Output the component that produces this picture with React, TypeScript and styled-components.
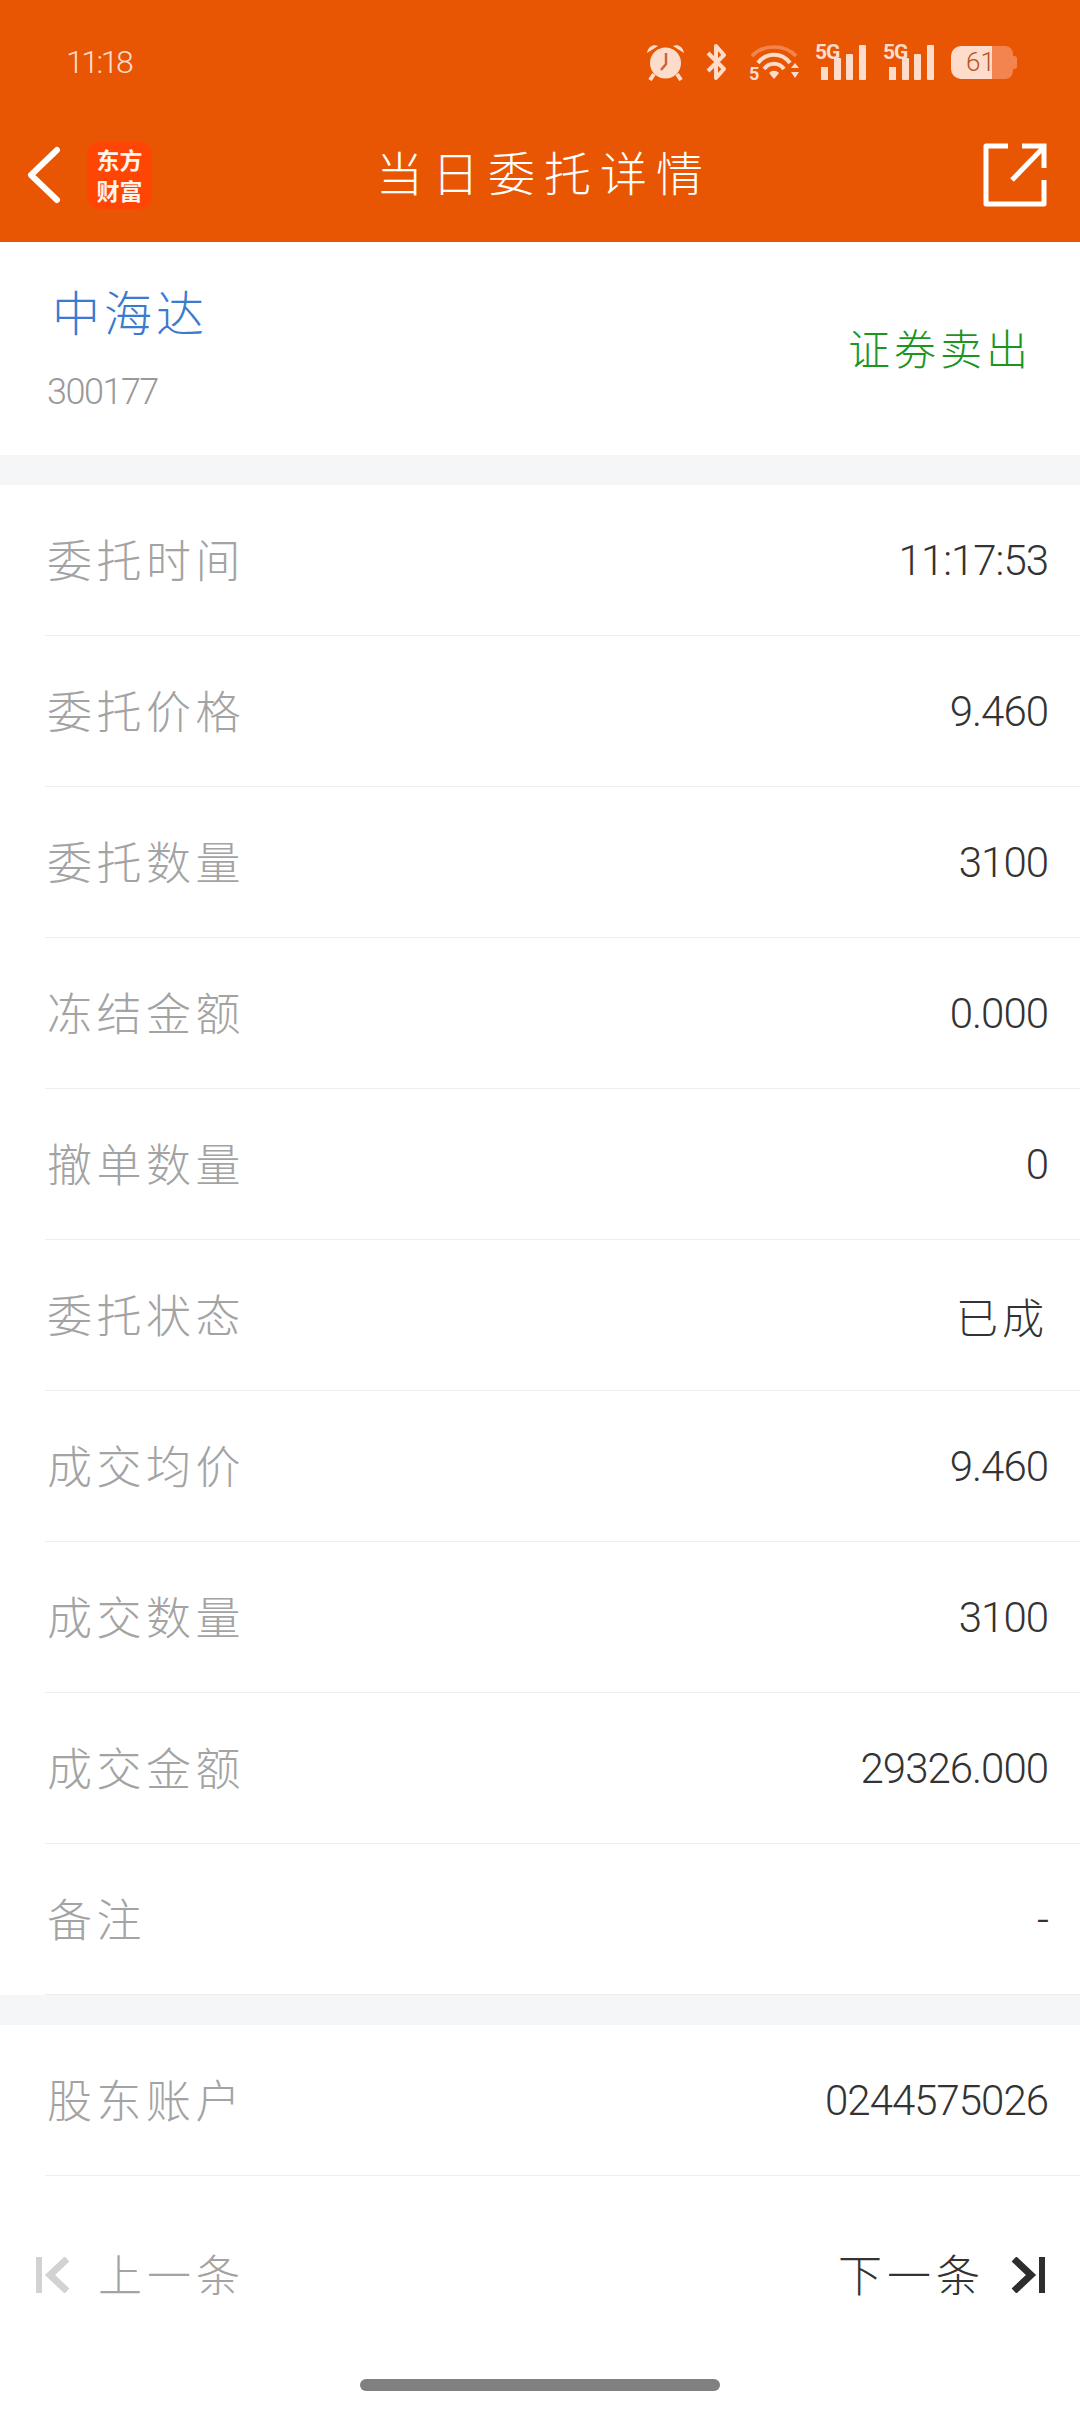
import React from 'react';
import styled, { createGlobalStyle } from 'styled-components';

const SANS = '"Roboto", "Noto Sans CJK SC", sans-serif';

const GlobalStyle = createGlobalStyle`
  html, body {
    margin: 0;
    padding: 0;
    background: #fff;
  }
  * {
    box-sizing: border-box;
  }
`;

const Screen = styled.div`
  width: 1080px;
  height: 2412px;
  display: flex;
  flex-direction: column;
  overflow: hidden;
  background: #fff;
  font-family: ${SANS};
  font-weight: 300;
`;

const Header = styled.header`
  height: 242px;
  display: flex;
  flex-direction: column;
  background: #e85603;
`;

const StatusBar = styled.div`
  height: 108px;
  padding: 16px 63px 0 66px;
  display: flex;
  align-items: center;
  justify-content: space-between;
`;

const Clock = styled.span`
  font-size: 32px;
  font-weight: 300;
  letter-spacing: -2.5px;
  color: #fddccb;
`;

const StatusIcons = styled.div`
  display: flex;
  align-items: center;
`;

const StatusIcon = styled.svg<{ $gap?: number }>`
  display: block;
  margin-right: ${(props) => props.$gap ?? 0}px;
`;

const Battery = styled.div`
  display: flex;
  align-items: center;
  width: 66px;
  height: 33px;
`;

const BatteryLevel = styled.div`
  width: 41px;
  height: 33px;
  padding-left: 15px;
  border-radius: 10px 0 0 10px;
  background: #fddccb;
  color: #b9531c;
  font-size: 26px;
  line-height: 33px;
  font-weight: 300;
`;

const BatteryRest = styled.div`
  width: 21px;
  height: 33px;
  border-radius: 0 8px 8px 0;
  background: #f38450;
`;

const BatteryCap = styled.div`
  width: 4px;
  height: 13px;
  border-radius: 0 3px 3px 0;
  background: #f38450;
`;

const NavBar = styled.div`
  flex: 1;
  position: relative;
  padding: 0 33px 0 26px;
  display: flex;
  align-items: center;
  justify-content: space-between;
`;

const NavLeft = styled.div`
  display: flex;
  align-items: center;
  gap: 25px;
`;

const Logo = styled.div`
  width: 65px;
  height: 67px;
  border-radius: 13px;
  background: #ff4503;
  display: flex;
  flex-direction: column;
  align-items: center;
  justify-content: center;
  color: #fff4ec;
  font-family: "Noto Sans CJK SC", sans-serif;
  font-size: 23px;
  line-height: 31px;
  font-weight: 700;
`;

const Title = styled.h1`
  position: absolute;
  left: 376px;
  top: 36px;
  margin: 0;
  font-size: 47px;
  line-height: 62px;
  font-weight: 300;
  letter-spacing: 9px;
  color: #fff;
  white-space: nowrap;
`;

const Summary = styled.section`
  height: 213px;
  padding: 0 48px 0 47px;
  display: flex;
  align-items: center;
  justify-content: space-between;
`;

const StockInfo = styled.div`
  display: flex;
  flex-direction: column;
  gap: 26px;
`;

const StockName = styled.div`
  margin-left: 5px;
  font-size: 48px;
  line-height: 60px;
  letter-spacing: 4px;
  color: #3a7bd0;
`;

const StockCode = styled.div`
  font-size: 36px;
  line-height: 42px;
  letter-spacing: -1.5px;
  color: #999;
`;

const Side = styled.div`
  margin-bottom: 4px;
  font-size: 42px;
  letter-spacing: 4px;
  color: #1a961f;
`;

const Gap = styled.div`
  height: 30px;
  background: #f5f6f8;
`;

const Rows = styled.section`
  display: flex;
  flex-direction: column;
`;

const Row = styled.div`
  height: 151px;
  margin-left: 45px;
  padding: 0 32px 0 2px;
  display: flex;
  align-items: center;
  justify-content: space-between;
  border-bottom: 1px solid #eeeeee;
`;

const Label = styled.span`
  margin-bottom: 3px;
  font-size: 45px;
  letter-spacing: 4.5px;
  color: #a3a3a3;
`;

const Value = styled.span<{ $cjk?: boolean }>`
  font-size: 42px;
  letter-spacing: ${(props) => (props.$cjk ? 4 : -1)}px;
  color: #333;
`;

const Pager = styled.nav`
  height: 198px;
  padding: 0 35px 0 36px;
  display: flex;
  align-items: center;
  justify-content: space-between;
`;

const PagerButton = styled.div<{ $disabled?: boolean }>`
  display: flex;
  align-items: center;
  gap: ${(props) => (props.$disabled ? 28 : 26)}px;
  font-size: 44px;
  letter-spacing: 5px;
  color: ${(props) => (props.$disabled ? '#a3a3a3' : '#333')};
`;

const PagerText = styled.span`
  margin-bottom: 4px;
`;

const HomeSlot = styled.div`
  flex: 1;
  padding-top: 5px;
  display: flex;
  justify-content: center;
`;

const HomeBar = styled.div`
  width: 360px;
  height: 12px;
  border-radius: 6px;
  background: #808080;
`;

const ICON = '#fddccb';

function AlarmIcon() {
  return (
    <StatusIcon $gap={21} width="39" height="38" viewBox="0 0 39 38">
      <circle cx="19.5" cy="20" r="15.5" fill={ICON} />
      <path d="M1 10 C2 3 8 1 12 3 Z M38 10 C37 3 31 1 27 3 Z" fill={ICON} />
      <path d="M8 31 L4 37 M31 31 L35 37" stroke={ICON} strokeWidth="4" />
      <path d="M20 10 V21 L15 27" stroke="#c8683a" strokeWidth="2.5" fill="none" />
    </StatusIcon>
  );
}

function BluetoothIcon() {
  return (
    <StatusIcon $gap={22} width="21" height="38" viewBox="0 0 21 38">
      <path
        d="M2 10 L18 26 L10 35 V3 L18 12 L2 28"
        fill="none"
        stroke={ICON}
        strokeWidth="4"
        strokeLinejoin="round"
      />
    </StatusIcon>
  );
}

function WifiIcon() {
  return (
    <StatusIcon $gap={15} width="51" height="46" viewBox="0 -4 51 46">
      <path d="M3 13 C14 1 36 1 47 13" fill="none" stroke="#f38450" strokeWidth="3.5" />
      <path d="M9 20 C17 9 33 9 41 20" fill="none" stroke={ICON} strokeWidth="4" />
      <path d="M15 26 C20 19 30 19 35 26" fill="none" stroke={ICON} strokeWidth="4" />
      <path d="M20 30 C23 27 27 27 30 30 L25 36 Z" fill={ICON} />
      <path d="M42 25 L46 20 L50 25 Z M42 29 L50 29 L46 35 Z" fill={ICON} />
      <text x="0" y="37" fontFamily="Roboto" fontWeight="700" fontSize="18" fill={ICON}>
        5
      </text>
    </StatusIcon>
  );
}

function SignalIcon({ gap }: { gap: number }) {
  return (
    <StatusIcon $gap={gap} width="52" height="46" viewBox="0 -4 52 46">
      <text x="0" y="16" fontFamily="Roboto" fontWeight="700" fontSize="21" letterSpacing="-1" fill={ICON}>
        5G
      </text>
      <rect x="6" y="24" width="7" height="13" fill={ICON} />
      <rect x="19" y="15" width="7" height="22" rx="1" fill={ICON} />
      <rect x="31" y="11" width="7" height="26" rx="1" fill={ICON} />
      <rect x="44" y="2" width="7" height="35" rx="1" fill={ICON} />
    </StatusIcon>
  );
}

function BackIcon() {
  return (
    <svg width="36" height="58" viewBox="0 0 36 58">
      <path
        d="M31 4 L5 29 L31 54"
        fill="none"
        stroke="#fff"
        strokeWidth="6"
        strokeLinecap="round"
        strokeLinejoin="round"
      />
    </svg>
  );
}

function ShareIcon() {
  return (
    <svg width="64" height="64" viewBox="0 0 64 64">
      <path
        d="M25 3 H3 V61 H61 V37"
        fill="none"
        stroke="#fff"
        strokeWidth="5"
        strokeLinejoin="round"
      />
      <path d="M29 37 L59 6" fill="none" stroke="#fff" strokeWidth="5" />
      <path d="M39 3 H61 V25" fill="none" stroke="#fff" strokeWidth="5" />
    </svg>
  );
}

function PagerIcon({ color, flip }: { color: string; flip?: boolean }) {
  return (
    <svg
      width="34"
      height="36"
      viewBox="0 0 34 36"
      style={flip ? { transform: 'scaleX(-1)' } : undefined}>
      <rect x="0" y="0" width="6" height="36" fill={color} />
      <path d="M31 2 L14 18 L31 34" fill="none" stroke={color} strokeWidth="7" />
    </svg>
  );
}

const ORDER_ROWS = [
  ['委托时间', '11:17:53'],
  ['委托价格', '9.460'],
  ['委托数量', '3100'],
  ['冻结金额', '0.000'],
  ['撤单数量', '0'],
  ['委托状态', '已成'],
  ['成交均价', '9.460'],
  ['成交数量', '3100'],
  ['成交金额', '29326.000'],
  ['备注', '-'],
];

export default function App() {
  return (
    <Screen>
      <GlobalStyle />
      <Header>
        <StatusBar>
          <Clock>11:18</Clock>
          <StatusIcons>
            <AlarmIcon />
            <BluetoothIcon />
            <WifiIcon />
            <SignalIcon gap={16} />
            <SignalIcon gap={16} />
            <Battery>
              <BatteryLevel>61</BatteryLevel>
              <BatteryRest />
              <BatteryCap />
            </Battery>
          </StatusIcons>
        </StatusBar>
        <NavBar>
          <NavLeft>
            <BackIcon />
            <Logo>
              <div>东方</div>
              <div>财富</div>
            </Logo>
          </NavLeft>
          <Title>当日委托详情</Title>
          <ShareIcon />
        </NavBar>
      </Header>

      <Summary>
        <StockInfo>
          <StockName>中海达</StockName>
          <StockCode>300177</StockCode>
        </StockInfo>
        <Side>证券卖出</Side>
      </Summary>
      <Gap />

      <Rows>
        {ORDER_ROWS.map(([label, value]) => (
          <Row key={label}>
            <Label>{label}</Label>
            <Value $cjk={value === '已成'}>{value}</Value>
          </Row>
        ))}
      </Rows>
      <Gap />

      <Rows>
        <Row>
          <Label>股东账户</Label>
          <Value>0244575026</Value>
        </Row>
      </Rows>

      <Pager>
        <PagerButton $disabled>
          <PagerIcon color="#d2d2d2" />
          <PagerText>上一条</PagerText>
        </PagerButton>
        <PagerButton>
          <PagerText>下一条</PagerText>
          <PagerIcon color="#2e2e2e" flip />
        </PagerButton>
      </Pager>
      <HomeSlot>
        <HomeBar />
      </HomeSlot>
    </Screen>
  );
}
